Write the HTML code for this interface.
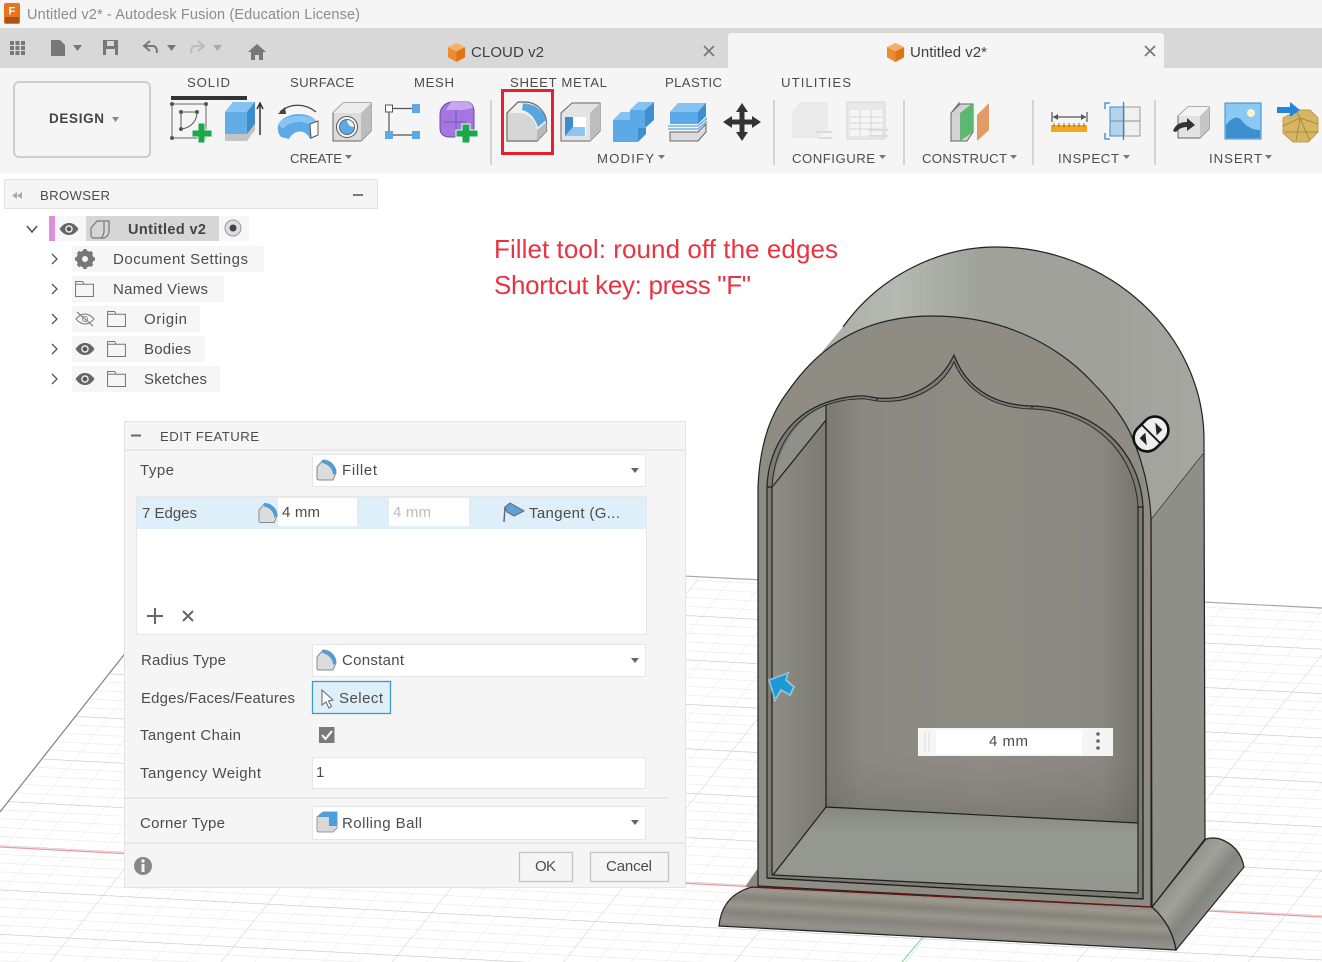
<!DOCTYPE html>
<html><head><meta charset="utf-8"><title>Untitled v2* - Autodesk Fusion</title>
<style>
html,body{margin:0;padding:0;background:#fff;width:1322px;height:962px;overflow:hidden}
svg{display:block}
text{font-family:"Liberation Sans",sans-serif;font-size:15px;fill:#4c4c4c}
text.u{font-size:13.2px}
</style></head><body>
<svg width="1322" height="962" viewBox="0 0 1322 962" xmlns="http://www.w3.org/2000/svg">
<defs>
<pattern id="grid" patternUnits="userSpaceOnUse" width="100" height="100" patternTransform="matrix(1.642 .087 -.34 .426 958 896)">
<path d="M20 0V100M40 0V100M60 0V100M80 0V100" stroke="#f1f1f1" stroke-width=".6" fill="none"/>
<path d="M0 20H100M0 40H100M0 60H100M0 80H100" stroke="#eeeeee" stroke-width="1.600" fill="none"/>
<path d="M0 0V100" stroke="#dadada" stroke-width="1" fill="none"/>
<path d="M0 0H100" stroke="#c4c4c4" stroke-width="2.600" fill="none"/>
</pattern>
<linearGradient id="shell" x1="0" x2="1" y1="0" y2="0"><stop offset="0" stop-color="#abafa8"/><stop offset=".2" stop-color="#b5b9b2"/><stop offset=".42" stop-color="#9fa19a"/><stop offset=".75" stop-color="#9fa19a"/><stop offset="1" stop-color="#a5a7a0"/></linearGradient>
<linearGradient id="wall" x1="0" x2="1" y1="0" y2="0"><stop offset="0" stop-color="#7b7a72"/><stop offset=".12" stop-color="#8a8880"/><stop offset=".5" stop-color="#8e8c83"/><stop offset=".88" stop-color="#8a8880"/><stop offset="1" stop-color="#76756e"/></linearGradient>
<linearGradient id="wallb" x1="0" x2="0" y1="0" y2="1"><stop offset=".6" stop-color="#777" stop-opacity="0"/><stop offset="1" stop-color="#5f5f58" stop-opacity=".4"/></linearGradient>
<linearGradient id="side" x1="0" x2="1" y1="0" y2="0"><stop offset="0" stop-color="#8d8e86"/><stop offset="1" stop-color="#7b7a72"/></linearGradient>
<linearGradient id="floor" x1="0" x2="0" y1="0" y2="1"><stop offset="0" stop-color="#868780"/><stop offset=".3" stop-color="#949891"/><stop offset="1" stop-color="#939790"/></linearGradient>
<linearGradient id="base" gradientUnits="userSpaceOnUse" x1="941" y1="893" x2="938" y2="945"><stop offset="0" stop-color="#8a877f"/><stop offset=".15" stop-color="#9c988f"/><stop offset=".3" stop-color="#86837b"/><stop offset=".45" stop-color="#9a968d"/><stop offset=".6" stop-color="#85837b"/><stop offset=".78" stop-color="#94928b"/><stop offset="1" stop-color="#7c7a73"/></linearGradient>
<linearGradient id="baser" gradientUnits="userSpaceOnUse" x1="1170" y1="865" x2="1224" y2="908"><stop offset="0" stop-color="#8a8a82"/><stop offset=".4" stop-color="#a0a199"/><stop offset=".65" stop-color="#858580"/><stop offset="1" stop-color="#979890"/></linearGradient>
<symbol id="fil" viewBox="0 0 21 22"><path d="M1 8L7 1C14 1 20 7 20 14L17 21H3Q1 21 1 19Z" fill="#dcdcdc" stroke="#8a8a8a"/><path d="M7 1C14 1 20 7 20 14L17 16C17 10 12 5 6 4Z" fill="#4b9fdc"/></symbol>
<symbol id="cube" viewBox="0 0 20 22"><path d="M10 1L19 5.500V16L10 21L1 16V5.500Z" fill="#ee8a30"/><path d="M10 1L19 5.500L10 10L1 5.500Z" fill="#f6b06a"/><path d="M10 10L19 5.500V16L10 21Z" fill="#de7418"/></symbol>
<symbol id="eye" viewBox="0 0 20 12"><path d="M0.500 6C4 1 7 0 10 0S16 1 19.500 6C16 11 13 12 10 12S4 11 0.500 6Z" fill="#666"/><circle cx="10" cy="6" r="3.800" fill="#eee"/><circle cx="10" cy="6" r="2.300" fill="#555"/></symbol>
<symbol id="fold" viewBox="0 0 20 17"><path d="M.5 16.500V.5H8L9.500 3.500H19.500V16.500ZM.5 3.500H9.500" fill="none" stroke="#777" stroke-width="1.100"/></symbol>
</defs>

<!-- viewport grid -->
<path d="M205 552L1322 608V962H0V812Z" fill="url(#grid)"/>
<path d="M0 812L205 552" stroke="#808080" stroke-width="1.200"/>
<path d="M205 552L1322 608" stroke="#a8a8a8" stroke-width="1.200"/>
<path d="M0 847L1322 917" stroke="#f0969c" stroke-width="1.300"/>
<path d="M902 962L954 900" stroke="#8ed69a" stroke-width="1.200"/>

<!-- model -->
<path d="M758 868L745 887H758Z" fill="#8a8a82"/>
<path d="M1152 907L1206 839Q1213 837 1220 839Q1240 846 1244 867L1176 950Q1172 925 1152 907Z" fill="url(#baser)" stroke="#222" stroke-width="1.200"/>
<path d="M719 926Q722 895 752 887L1152 907Q1172 925 1176 950Z" fill="url(#base)" stroke="#222" stroke-width="1.200"/>
<path d="M1151 519L1204 452L1205 839L1152 907Z" fill="#8e8f87" stroke="#222" stroke-width="1.200"/>
<path d="M821 353L843 327C880 275 940 247 996 247C1110 247 1204 335 1204 440V452L1151 519C1145 420 1060 316 932 316C890 316 850 330 821 353Z" fill="url(#shell)"/>
<path d="M843 327C880 275 940 247 996 247C1110 247 1204 335 1204 440V452" fill="none" stroke="#222" stroke-width="1.200"/>
<path d="M758 886V487C760 440 772 412 789 390C810 360 850 316 932 316C965 316 995 322 1021 333C1050 345 1075 363 1093 383C1110 400 1125 420 1132 437C1142 460 1150 490 1151 519V907Z" fill="#8e8c83" stroke="#222" stroke-width="1.200"/>
<path d="M767 878V487C768 450 790 402 857 396C865 395 870 397 877 398C910 401 940 385 954 355C965 385 990 405 1032 406C1095 408 1140 450 1143 507V899Z" fill="#7c7b73" stroke="#222" stroke-width="1.200"/>
<path d="M772 875L826 807V420L772 486Z" fill="url(#side)"/>
<path d="M773 486C775 455 795 418 826 405V420Z" fill="#8f908a"/>
<path d="M826 405C835 401 850 399 857 399C865 398 870 400 877 401C912 404 942 388 954 362C965 388 990 408 1032 409C1092 411 1135 452 1138 507V823L826 807Z" fill="url(#wall)"/>
<path d="M826 650H1138V823L826 807Z" fill="url(#wallb)"/>
<path d="M826 807L1138 823V893L773 875Z" fill="url(#floor)"/>
<path d="M772 486C774 450 795 402 857 399C865 398 870 400 877 401C912 404 942 388 954 362C965 388 990 408 1032 409C1092 411 1135 452 1138 507" fill="none" stroke="#2a2a2a" stroke-width="1"/>
<path d="M826 405V807L1138 823M826 420L773 486M826 807L773 875L1138 893M767 878L1143 899M772 486V875M1138 507V893M1143 507V899M877 398V401M1032 406V409M767 487H773M1138 507H1143" fill="none" stroke="#1f1f1f" stroke-width="1.200"/>
<path d="M752 887L1152 907" stroke="#6b1414" stroke-width="1.300"/>

<g transform="translate(1151 434) rotate(-45)"><rect x="-19" y="-13.500" width="38" height="27" rx="13.500" fill="#eee" stroke="#111" stroke-width="2.600"/><path d="M0 -13V13" stroke="#111" stroke-width="1.800"/><path d="M-3 -5L-11 -5L-11 5Z" fill="#222"/><path d="M3 5L11 5L11 -5Z" fill="#222"/></g>

<path d="M769 680L788 673L786 680L794 687L790 695L781 690L775 700Z" fill="#1b9ad6" stroke="#e8f6fc" stroke-width="1.400"/>
<path d="M769 680L788 673L786 680L794 687L790 695L781 690L775 700Z" fill="none" stroke="#1478ad" stroke-width=".5"/>

<rect x="918" y="728" width="195" height="28" fill="#f5f5f5"/><rect x="936" y="730" width="146" height="24" fill="#fff"/>
<path d="M925 732V752M929 732V752" stroke="#ddd"/>
<text x="989" y="746" textLength="39">4 mm</text>
<g fill="#666"><circle cx="1098" cy="734" r="1.800"/><circle cx="1098" cy="741" r="1.800"/><circle cx="1098" cy="748" r="1.800"/></g>

<!-- annotation -->
<text x="494" y="258" textLength="344" style="font-size:26px;fill:#ea3340">Fillet tool: round off the edges</text>
<text x="494" y="294" textLength="257" style="font-size:26px;fill:#ea3340">Shortcut key: press "F"</text>

<!-- title bar -->
<rect width="1322" height="28" fill="#f5f5f5"/>
<rect x="4" y="3" width="16" height="21" rx="2" fill="#e8741c"/><rect x="5" y="17" width="14" height="6" fill="#a8541a"/>
<text x="8.500" y="14.500" style="font-size:11px;font-weight:bold;fill:#fff">F</text>
<text x="27" y="19" textLength="333" style="fill:#8c8c8c;font-size:14.500px">Untitled v2* - Autodesk Fusion (Education License)</text>

<!-- tab bar -->
<rect y="28" width="1322" height="40" fill="#d8d8d8"/>
<g fill="#777"><rect x="10" y="41" width="4" height="4"/><rect x="15.500" y="41" width="4" height="4"/><rect x="21" y="41" width="4" height="4"/><rect x="10" y="46" width="4" height="4"/><rect x="15.500" y="46" width="4" height="4"/><rect x="21" y="46" width="4" height="4"/><rect x="10" y="51" width="4" height="4"/><rect x="15.500" y="51" width="4" height="4"/><rect x="21" y="51" width="4" height="4"/>
<path d="M51 40H60L65 45V56H51Z"/><path d="M73 45H82L77.500 51Z"/>
<path d="M103 40H118V55H103ZM107 41V46H114V41ZM106 49V55H115V49Z" fill-rule="evenodd"/>
<path d="M167 45H176L171.500 51Z"/><path d="M257 44L266 52H263V60H259V55H255V60H251V52H248Z"/></g>
<path d="M150 41L144 46L150 51M144 46H153Q157 46 157 53" fill="none" stroke="#777" stroke-width="2"/>
<path d="M198 41L204 46L198 51M204 46H195Q191 46 191 53" fill="none" stroke="#bbb" stroke-width="2"/>
<path d="M213 45H222L217.500 51Z" fill="#aaa"/>
<use href="#cube" x="447" y="42" width="19" height="21"/>
<text x="471" y="57" textLength="73" style="fill:#3f3f3f">CLOUD v2</text>
<path d="M704 46L714 56M714 46L704 56" stroke="#777" stroke-width="1.700"/>
<path d="M728 68V37Q728 33 732 33H1160Q1164 33 1164 37V68Z" fill="#f5f5f5"/>
<use href="#cube" x="886" y="42" width="19" height="21"/>
<text x="910" y="57" textLength="77" style="fill:#3f3f3f">Untitled v2*</text>
<path d="M1145 46L1155 56M1155 46L1145 56" stroke="#777" stroke-width="1.700"/>

<!-- ribbon -->
<rect y="68" width="1322" height="105" fill="#f5f5f5"/>
<rect x="14" y="82" width="136" height="75" rx="5" fill="#f5f5f5" stroke="#cdcdcd" stroke-width="2"/>
<text x="49" y="123" textLength="55" style="font-weight:bold;font-size:13.500px;fill:#444">DESIGN</text>
<path d="M112 117H119L115.500 122Z" fill="#888"/>
<text class="u" x="187" y="87" textLength="43">SOLID</text>
<text class="u" x="290" y="87" textLength="64">SURFACE</text>
<text class="u" x="414" y="87" textLength="40">MESH</text>
<text class="u" x="510" y="87" textLength="97">SHEET METAL</text>
<text class="u" x="665" y="87" textLength="57">PLASTIC</text>
<text class="u" x="781" y="87" textLength="70">UTILITIES</text>
<text class="u" x="290" y="163" textLength="52">CREATE</text>
<text class="u" x="597" y="163" textLength="57">MODIFY</text>
<text class="u" x="792" y="163" textLength="83">CONFIGURE</text>
<text class="u" x="922" y="163" textLength="85">CONSTRUCT</text>
<text class="u" x="1058" y="163" textLength="61">INSPECT</text>
<text class="u" x="1209" y="163" textLength="53">INSERT</text>
<g fill="#777"><path d="M345 155H352L348.500 159Z"/><path d="M658 155H665L661.500 159Z"/><path d="M879 155H886L882.500 159Z"/><path d="M1010 155H1017L1013.500 159Z"/><path d="M1123 155H1130L1126.500 159Z"/><path d="M1265 155H1272L1268.500 159Z"/></g>
<rect x="171" y="96" width="76" height="4" fill="#333"/>
<g stroke="#d4d4d4" stroke-width="2"><path d="M491 100V165M774 100V165M904 100V165M1033 100V165M1155 100V165"/></g>

<!-- sketch -->
<path d="M172 104H206V138H172Z" fill="none" stroke="#666"/><g fill="#555"><circle cx="172" cy="104" r="2"/><circle cx="206" cy="104" r="2"/><circle cx="172" cy="138" r="2"/><circle cx="181" cy="112" r="2"/><circle cx="197" cy="112" r="2"/><circle cx="181" cy="129" r="2"/></g>
<path d="M181 112H197C197 122 190 128 181 129V112" fill="none" stroke="#555"/>
<path d="M198 123H205V130H212V137H205V143H198V137H192V130H198Z" fill="#1ea64a" stroke="#f5f5f5"/>
<!-- extrude -->
<path d="M225 134V112L233 102H255V124L247 134Z" fill="#62ade8"/><path d="M225 112L233 102H255L247 112Z" fill="#84c3f2"/><path d="M247 112L255 102V124L247 134Z" fill="#3d8ccc"/><path d="M225 134H247L255 124V130L247 141H225Z" fill="#c4c4c4"/>
<path d="M260 135V105M257 109L260 103L263 109" fill="none" stroke="#333" stroke-width="1.500"/>
<!-- revolve -->
<path d="M278 125C285 111 310 111 317 122V136L310 139C306 129 294 129 289 139L281 137Q277 133 278 125Z" fill="#5ba9e6"/><path d="M278 125C285 113 310 113 317 122L312 126C304 120 290 120 283 129Z" fill="#86c4f2"/><path d="M310 124L318 121V135L311 138Z" fill="#fff" stroke="#555"/>
<path d="M280 112C290 103 305 103 316 112" fill="none" stroke="#444" stroke-width="1.300"/><path d="M278 114L285 107L286 114Z" fill="#444"/>
<!-- hole -->
<path d="M333 113L343 103H371V131L361 141H333Z" fill="#dcdcdc" stroke="#666"/><path d="M361 113L371 103V131L361 141Z" fill="#bdbdbd"/><path d="M333 113L343 103H371L361 113Z" fill="#ededed"/>
<circle cx="347" cy="127" r="10.500" fill="#f4f4f4" stroke="#555"/><circle cx="347" cy="127" r="7.500" fill="#5ba9e6" stroke="#666"/><path d="M347 120A7 7 0 0 1 354 127Q348 127 347 120Z" fill="#f4f4f4"/>
<!-- form -->
<path d="M393 108.500H412M389 112V131M393 135H412" stroke="#555" stroke-width="1.200"/>
<rect x="385.500" y="105" width="7" height="7" fill="#fff" stroke="#555"/><rect x="412" y="104" width="8" height="9" fill="#5ba9e6"/><rect x="385" y="131" width="8" height="8" fill="#5ba9e6"/><rect x="412" y="131" width="8" height="8" fill="#5ba9e6"/>
<!-- form purple -->
<path d="M440 114Q441 104 451 102H468Q474 104 474 112V128Q474 137 466 137H450Q440 137 440 128Z" fill="#a377df" stroke="#6e4aa8"/><path d="M451 102H468Q472 103 473 108L463 110H446Z" fill="#c5a6ef"/><path d="M443 122H466M456 110V136" stroke="#7a55bb"/>
<path d="M462 124H470V130H478V137H470V143H462V137H456V130H462Z" fill="#1ea64a" stroke="#f5f5f5"/>

<!-- highlight + fillet -->
<path d="M507 113L518 102H525C537 102 546 112 546.500 122V131L537 141H507Z" fill="#efefef" stroke="#666" stroke-width="1.200"/>
<path d="M507.600 113H518C528 113 536 120 537 130V140.400H507.600Z" fill="#d6d6d6"/>
<path d="M523 103.500C535 103 545 112 546 120L538 127C535 118 530 112 522 110Z" fill="#57a6e0"/>
<path d="M537 130L546.500 122V131L537 141Z" fill="#b9b9b9"/>
<rect x="502.500" y="90.500" width="50" height="63" fill="none" stroke="#e8202e" stroke-width="3"/>
<!-- shell -->
<path d="M561 113L572 103H600V131L590 141H561Z" fill="#e4e4e4" stroke="#666"/><path d="M590 113L600 103V131L590 141Z" fill="#bdbdbd"/><rect x="565" y="117" width="21" height="19" fill="#fff"/><path d="M565 136L573 127H585V136Z" fill="#8cc6f2"/><path d="M565 117H573V127L565 136Z" fill="#3d8ccc"/>
<!-- combine -->
<path d="M613 120H630V110H645V128H638V142H613Z" fill="#5ba9e6"/><path d="M613 120L621 112H630V120Z" fill="#84c3f2"/><path d="M630 110L638 102H654L645 110Z" fill="#84c3f2"/><path d="M645 110L654 102V120L645 128Z" fill="#3f8fd0"/><path d="M638 128H646V134L638 142Z" fill="#3f8fd0"/>
<!-- offset -->
<path d="M670 112L678 103H706V116L698 124H670Z" fill="#5ba9e6"/><path d="M670 112L678 103H706L698 112Z" fill="#84c3f2"/><path d="M698 112L706 103V116L698 124Z" fill="#3f8fd0"/>
<path d="M668 126H698L707 118M668 129H698L707 121" fill="none" stroke="#5ba9e6" stroke-width="1.300"/>
<path d="M670 132H698L706 124V132L698 141H670Z" fill="#dcdcdc" stroke="#666"/>
<!-- move -->
<path d="M742 103L748 112H744.500V119.500H752V116L761 122L752 128V124.500H744.500V132H748L742 141L736 132H739.500V124.500H732V128L723 122L732 116V119.500H739.500V112H736Z" fill="#333"/>
<!-- configure disabled -->
<path d="M792 112L800 102H828V128L818 138H792Z" fill="#eaeaea"/><path d="M816 132H832M818 138H832" stroke="#dcdcdc" stroke-width="2"/>
<rect x="847" y="102" width="38" height="37" fill="#e8e8e8" stroke="#d8d8d8"/><rect x="850" y="110" width="32" height="26" fill="#f5f5f5"/><path d="M850 117H882M850 123H882M850 129H882M860 110V136M871 110V136" stroke="#d6d6d6"/><path d="M868 130H888M868 136H888" stroke="#dcdcdc" stroke-width="2"/>
<!-- construct -->
<path d="M951 113L959 103V134L951 141Z" fill="#f4f4f4" stroke="#666"/><path d="M951 113L960 104H973V132L967 141H951Z" fill="#d4d4d4" stroke="#666"/><path d="M960 113L973 103V132L960 141Z" fill="#5cb871"/>
<path d="M977 115L989 103V130L977 141Z" fill="#e39a66"/>
<!-- inspect -->
<path d="M1052 112V122M1087 112V122M1053 117H1086" stroke="#555" stroke-width="1.200"/><path d="M1058 114L1053 117L1058 120ZM1081 114L1086 117L1081 120Z" fill="#555"/>
<rect x="1051" y="125" width="36" height="7" fill="#f3a71a"/><path d="M1054 123V127M1059 123V127M1064 123V127M1069 123V127M1074 123V127M1079 123V127M1084 123V127" stroke="#a06a10"/>
<rect x="1110" y="107" width="14" height="29" fill="#b2d4ef" stroke="#3d8ccc"/><rect x="1124" y="107" width="16" height="29" fill="#f0f0f0" stroke="#999"/><path d="M1110 121H1140" stroke="#888"/><path d="M1123.500 102V140" stroke="#2a8ad6" stroke-width="1.300"/><path d="M1110 103H1105V109M1110 139H1105V133" fill="none" stroke="#2a8ad6" stroke-width="1.300"/>
<!-- insert -->
<path d="M1178 116L1188 107H1209V129L1200 138H1178Z" fill="#e2e2e2" stroke="#666"/><path d="M1200 116L1209 107V129L1200 138Z" fill="#c6c6c6"/><path d="M1178 116L1188 107H1209L1200 116Z" fill="#f4f4f4"/>
<path d="M1173 131Q1176 122 1187 122V118L1195 125L1187 131V127Q1180 127 1176 132Z" fill="#333"/>
<rect x="1225" y="103" width="36" height="36" fill="#8cc8f4" stroke="#3d8ccc"/><path d="M1226 125Q1236 112 1243 122Q1250 130 1260 130V138H1226Z" fill="#3d8fce"/><circle cx="1251" cy="113" r="4" fill="#fbf3c8"/>
<path d="M1283 118L1297 110H1310L1318 118V132L1308 142H1293L1283 133Z" fill="#d6b565" stroke="#c09c48"/><path d="M1283 126L1300 118L1318 124M1296 111L1300 118L1296 141M1300 118L1310 141M1285 132L1318 132" fill="none" stroke="#a98a3e"/>
<path d="M1277 107H1290V102L1300 110L1290 117V113H1277Z" fill="#1f88dc"/>

<!-- browser -->
<rect x="4.500" y="179.500" width="373" height="29" fill="#f5f5f5" stroke="#e2e2e2"/>
<path d="M17 192L12 195.500L17 199ZM22 192L17 195.500L22 199Z" fill="#aaa"/>
<text class="u" x="40" y="200" textLength="70">BROWSER</text>
<rect x="353" y="194" width="10" height="2" fill="#777"/>
<rect x="49" y="216" width="6" height="25" fill="#dd8fdc"/>
<rect x="55" y="216" width="194" height="25" fill="#f7f7f7"/>
<rect x="86" y="216" width="133" height="25" fill="#d6d6d6"/>
<use href="#eye" x="59" y="223" width="20" height="12"/>
<path d="M27 226L32 232L37 226" fill="none" stroke="#444" stroke-width="1.400"/>
<path d="M91 228L97 221H109V231Q109 236 104 238H94Q91 238 91 235ZM104 222V231Q104 235 101 238" fill="none" stroke="#777" stroke-width="1.200"/>
<text x="128" y="234" textLength="78" style="font-weight:bold;font-size:14.500px;fill:#444">Untitled v2</text>
<circle cx="233" cy="228" r="8" fill="#dcdce2" stroke="#999"/><circle cx="233" cy="228" r="3.500" fill="#444"/>
<g fill="#f6f6f6"><rect x="72" y="246" width="192" height="26"/><rect x="72" y="276" width="152" height="26"/><rect x="72" y="306" width="128" height="26"/><rect x="72" y="336" width="133" height="26"/><rect x="72" y="366" width="148" height="26"/></g>
<path d="M52 254L57 259L52 264M52 284L57 289L52 294M52 314L57 319L52 324M52 344L57 349L52 354M52 374L57 379L52 384" fill="none" stroke="#555" stroke-width="1.300"/>
<circle cx="85" cy="259" r="6.500" fill="none" stroke="#777" stroke-width="4"/><path d="M85 249V269M75 259H95M78 252L92 266M92 252L78 266" stroke="#777" stroke-width="3.500"/><circle cx="85" cy="259" r="3" fill="#f6f6f6"/>
<use href="#fold" x="75" y="281" width="19" height="16"/>
<path d="M76 319Q85 309 94 319Q85 329 76 319ZM77 312L93 326" fill="none" stroke="#888" stroke-width="1.200"/><circle cx="85" cy="319" r="2.500" fill="none" stroke="#888"/>
<use href="#fold" x="107" y="311" width="19" height="16"/>
<use href="#eye" x="75" y="343" width="20" height="12"/><use href="#fold" x="107" y="341" width="19" height="16"/>
<use href="#eye" x="75" y="373" width="20" height="12"/><use href="#fold" x="107" y="371" width="19" height="16"/>
<text x="113" y="264" textLength="135">Document Settings</text>
<text x="113" y="294" textLength="95">Named Views</text>
<text x="144" y="324" textLength="43">Origin</text>
<text x="144" y="354" textLength="47">Bodies</text>
<text x="144" y="384" textLength="63">Sketches</text>

<!-- dialog -->
<rect x="124.500" y="421.500" width="561" height="466" fill="#f5f5f5" stroke="#e4e4e4"/>
<path d="M125 450H685M125 798H669M125 843H685" stroke="#e0e0e0" stroke-width="1.300"/>
<rect x="131" y="434.500" width="10" height="2" fill="#666"/>
<text class="u" x="160" y="441" textLength="99">EDIT FEATURE</text>
<text x="140" y="475" textLength="34">Type</text>
<g fill="#fff" stroke="#e6e6e6"><rect x="312.500" y="454.500" width="333" height="32"/><rect x="136.500" y="496.500" width="510" height="138"/><rect x="312.500" y="644.500" width="333" height="32"/><rect x="312.500" y="757.500" width="333" height="31"/><rect x="312.500" y="806.500" width="333" height="33"/></g>
<use href="#fil" x="316" y="459" width="21" height="22"/>
<text x="342" y="475" textLength="35">Fillet</text>
<g fill="#666"><path d="M631 468H639L635 473Z"/><path d="M631 658H639L635 663Z"/><path d="M631 820H639L635 825Z"/></g>
<rect x="137" y="497" width="509" height="32" fill="#deeffa"/>
<text x="142" y="518" textLength="55">7 Edges</text>
<use href="#fil" x="258" y="502" width="20" height="22"/>
<rect x="278" y="498" width="79" height="28" fill="#fff"/><rect x="389" y="498" width="80" height="28" fill="#fff"/>
<text x="282" y="517" textLength="38">4 mm</text>
<text x="393" y="517" textLength="38" style="fill:#bcbcbc">4 mm</text>
<path d="M505 507L510 503L524 511L514 516L507 512Z" fill="#5f9fd4" stroke="#667"/><path d="M505 507L504 522" stroke="#667" stroke-width="1.500"/>
<text x="529" y="518" textLength="91">Tangent (G...</text>
<path d="M155 608V624M147 616H163" stroke="#666" stroke-width="2"/>
<path d="M183 611L193 621M193 611L183 621" stroke="#666" stroke-width="2"/>
<text x="141" y="665" textLength="85">Radius Type</text>
<use href="#fil" x="316" y="649" width="21" height="22"/>
<text x="342" y="665" textLength="62">Constant</text>
<text x="141" y="703" textLength="154">Edges/Faces/Features</text>
<rect x="312.500" y="681.500" width="78" height="32" fill="#deeffa" stroke="#3b9cc6" stroke-width="1.300"/>
<path d="M322 690V705L326 702L329 708L331.500 706.500L328.500 701L333 700Z" fill="#fff" stroke="#666"/>
<text x="339" y="703" textLength="44">Select</text>
<text x="140" y="740" textLength="101">Tangent Chain</text>
<rect x="319" y="727" width="15.500" height="16" fill="#7a7a7a"/><path d="M322 735L325.500 739L332 731" fill="none" stroke="#fff" stroke-width="2"/>
<text x="140" y="778" textLength="121">Tangency Weight</text>
<text x="316" y="777" textLength="8">1</text>
<text x="140" y="828" textLength="85">Corner Type</text>
<path d="M317 817L323 812H337V828L333 832H319Q317 832 317 830Z" fill="#d8d8d8" stroke="#999"/><path d="M317 817L323 812H337V826H329V817Z" fill="#4b9fdc"/>
<text x="342" y="828" textLength="80">Rolling Ball</text>
<circle cx="143" cy="866" r="9" fill="#888"/><rect x="141.500" y="864" width="3" height="8" fill="#f5f5f5"/><circle cx="143" cy="861" r="1.700" fill="#f5f5f5"/>
<rect x="519.500" y="852.500" width="53" height="29" fill="#f5f5f5" stroke="#c4c4c4" stroke-width="1.300"/>
<text x="535" y="871" textLength="21">OK</text>
<rect x="590.500" y="852.500" width="78" height="29" fill="#f5f5f5" stroke="#c4c4c4" stroke-width="1.300"/>
<text x="606" y="871" textLength="46">Cancel</text>
</svg>
</body></html>
